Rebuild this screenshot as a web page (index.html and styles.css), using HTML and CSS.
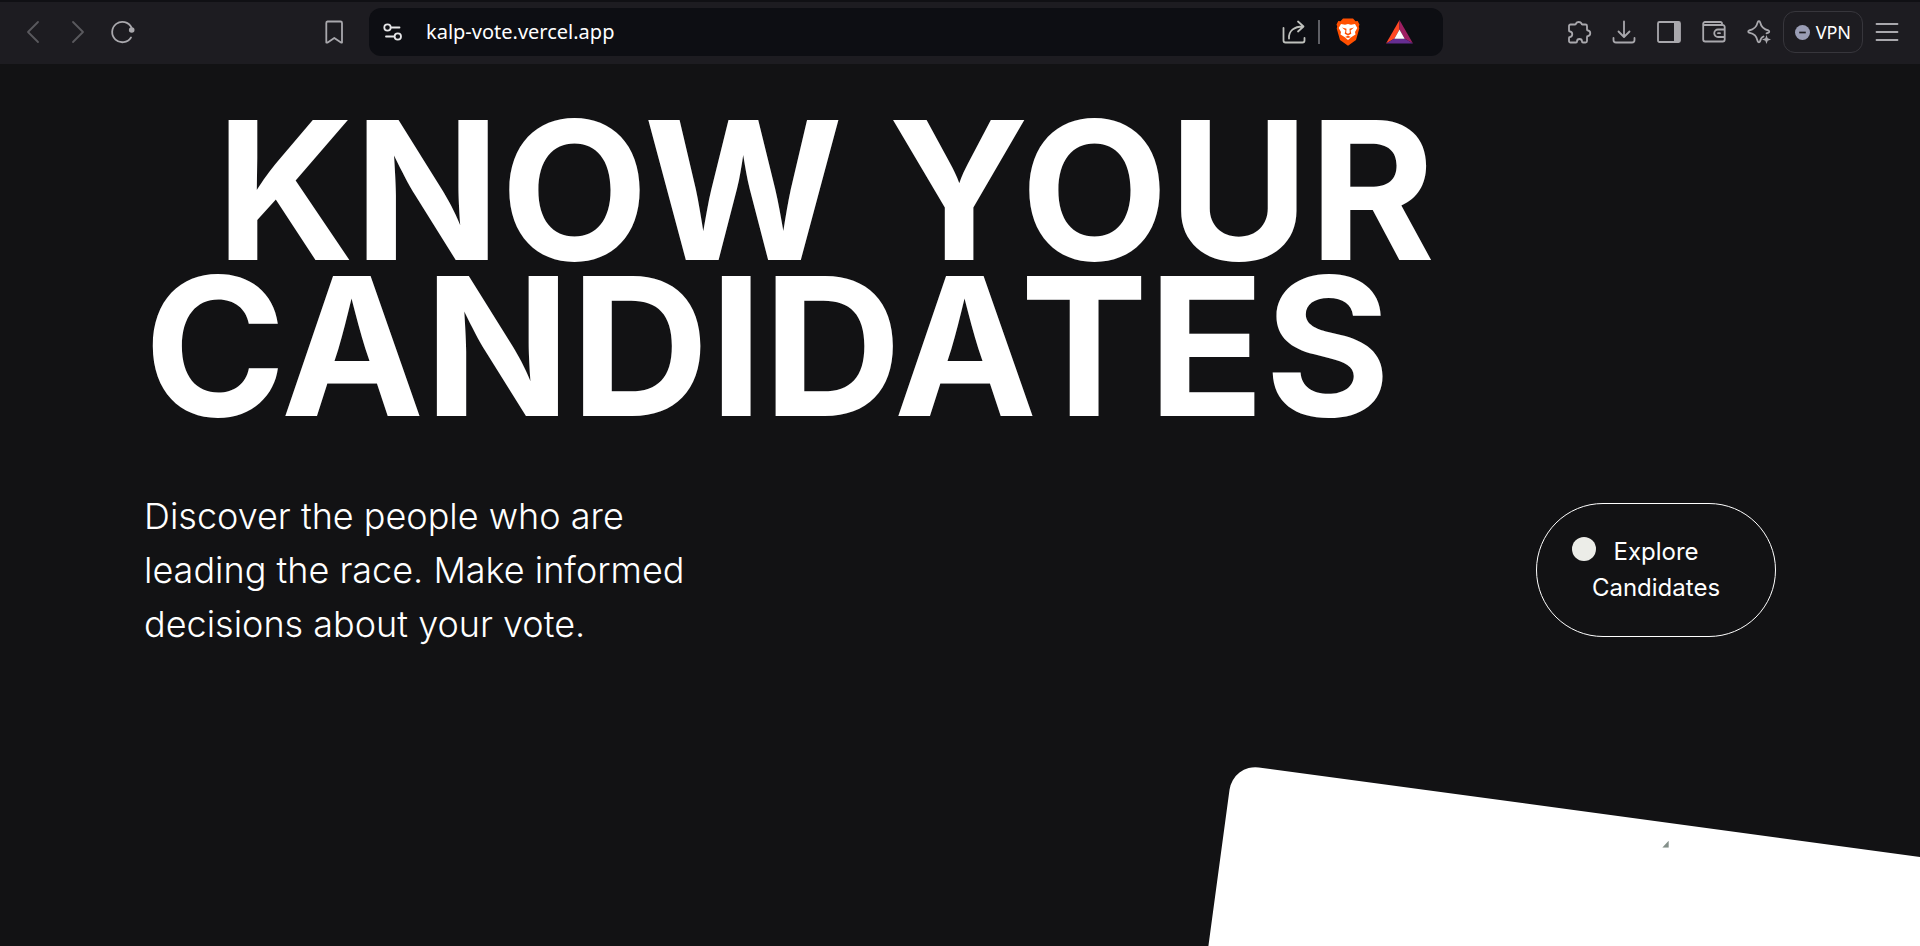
FILE: index.html
```html
<!DOCTYPE html>
<html lang="en">
<head>
<meta charset="utf-8">
<title>Kalp Vote</title>
<link rel="stylesheet" href="styles.css">
</head>
<body>
<header class="toolbar">
  <nav class="nav-group" aria-label="Navigation">
    <button class="icon-button dim" aria-label="Back"><svg viewBox="0 0 24 24"><path d="M17 2 7 12l10 10"/></svg></button>
    <button class="icon-button dim" aria-label="Forward"><svg viewBox="0 0 24 24"><path d="M7 2l10 10L7 22"/></svg></button>
    <button class="icon-button" aria-label="Reload"><svg viewBox="0 0 24 24"><path d="M20 17.500A10.200 10.200 0 1 1 20.500 7.500" stroke-width="1.800"/><circle cx="20.700" cy="10" r="2.800" fill="currentColor" stroke="none"/></svg></button>
  </nav>
  <button class="icon-button bookmark" aria-label="Bookmark"><svg viewBox="0 0 24 24"><path d="M5.500 1.500h13a1.500 1.500 0 0 1 1.500 1.500V22.500h-1l-6.700-4.500L5.700 22.500H4.300V3a1.500 1.500 0 0 1 1.200-1.500z"/></svg></button>
  <div class="address">
    <button class="icon-button bright" aria-label="Site settings"><svg viewBox="0 0 24 24"><circle cx="6.500" cy="7.500" r="3.200"/><path d="M10 7.500h8.500M5 16.500h8"/><circle cx="16.800" cy="16.500" r="3.200"/></svg></button>
    <input class="url" type="text" value="kalp-vote.vercel.app" aria-label="Address">
    <button class="icon-button share" aria-label="Share"><svg viewBox="0 0 24 24"><path d="M1.500 8v12.500a2 2 0 0 0 2 2h17a2 2 0 0 0 2-2V18M7 18.500C6.500 11 12 6.500 21 6.500M16 1.500l5.500 5-5.500 5"/></svg></button>
    <span class="divider"></span>
    <button class="icon-button shield" aria-label="Brave Shields"><svg viewBox="0 0 24 28"><path fill="#ff4f00" d="M7 .5h10l2.500 2.800 2.200-.3 1.800 3.500-.7 2 .5 2-3.300 11.500-8 5.800-8-5.800L.7 10.500l.5-2-.7-2L2.300 3l2.200.3z"/><path fill="#fff" d="M5 6l4 .8 3-.8 3 .8 4-.8 2.300 4-2.300 4 .5 2.500-4 2.500L12 22l-3.500-3-4-2.500.5-2.500-2.300-4z"/><path fill="#ff4f00" d="M6 9.500l4.500 1.200-.3 4 1.800 1 1.800-1-.3-4L18 9.500l-3.500 3 .8 3.200L12 17.500l-3.300-1.800.8-3.200zM9 19l3-1.200 3 1.200-3 1z"/></svg></button>
    <button class="icon-button rewards" aria-label="Brave Rewards"><svg viewBox="0 0 27 24"><path fill="#ff4724" d="M13.500 0 0 23.500l8.500-5 5-9z"/><path fill="#9e1f63" d="M13.500 0 27 23.500l-8.500-5-5-9z"/><path fill="#662d91" d="M0 23.500h27l-8.500-5h-10z"/><path fill="#fff" d="M13.500 9.500 8.300 18.700h10.400z"/></svg></button>
  </div>
  <div class="tools">
    <button class="icon-button" aria-label="Extensions"><svg viewBox="0 0 24 24"><path d="M3.500 4.500H8a1 1 0 0 0 1-1 3 2.500 0 0 1 5.500 0 1 1 0 0 0 1 1h3a1.500 1.500 0 0 1 1.500 1.500v3.500a1 1 0 0 0 1 1 2.800 2.800 0 0 1 0 5.500 1 1 0 0 0-1 1V21a1.500 1.500 0 0 1-1.500 1.500h-2.500a1 1 0 0 1-1-1 2.500 2.500 0 0 0-5 0 1 1 0 0 1-1 1H3.500A1.500 1.500 0 0 1 2 21v-3a1 1 0 0 1 1-1 2.800 2.800 0 0 0 0-5.500 1 1 0 0 1-1-1V6a1.500 1.500 0 0 1 1.500-1.500z"/></svg></button>
    <button class="icon-button" aria-label="Downloads"><svg viewBox="0 0 24 24"><path d="M12 1.500v15M6.500 11.500 12 17l5.500-5.500M1.500 18v2A2.500 2.500 0 0 0 4 22.500h16a2.500 2.500 0 0 0 2.500-2.500v-2"/></svg></button>
    <button class="icon-button" aria-label="Sidebar"><svg viewBox="0 0 24 24"><rect x="1" y="2" width="22" height="20" rx="1.500"/><path d="M17 2h6v20h-6z" fill="currentColor" stroke="none"/></svg></button>
    <button class="icon-button" aria-label="Wallet"><svg viewBox="0 0 24 24"><path d="M20 5V3.500A1.500 1.500 0 0 0 18.500 2H3a1.800 1.800 0 0 0-1.800 1.800V19.500A2 2 0 0 0 3.200 21.500h17.500a2 2 0 0 0 2-2V7a2 2 0 0 0-2-2H3a1.500 1.500 0 0 1-1.800-1.500M22.500 9.500H16a3.500 3.500 0 0 0 0 7.500h6.500M16 13.200h2"/></svg></button>
    <button class="icon-button" aria-label="Leo AI"><svg viewBox="0 0 24 24"><path d="M16.500 16.500c-2 .8-3 2.500-3.500 5-.4 1-1.800 1-2.200 0C9.500 16 7.500 13.800 2 12.700c-1-.4-1-1.800 0-2.200C7.500 9.400 9.500 7 10.800 2c.4-1 1.800-1 2.200 0 1.200 5 3.200 7.400 8.500 8.500 1 .4 1 1.800 0 2.200l-2 .6"/><path fill="currentColor" stroke="none" d="M19.500 15l1.200 3.300L24 19.500l-3.300 1.200L19.500 24l-1.200-3.300L15 19.500l3.300-1.200z"/></svg></button>
    <button class="vpn"><svg viewBox="0 0 16 16" aria-hidden="true"><circle cx="8" cy="8" r="8" fill="#9a9db5"/><path d="M4.500 8h7" stroke="#1d1c21" stroke-width="1.800"/></svg>VPN</button>
    <button class="icon-button" aria-label="Menu"><svg viewBox="0 0 24 24"><path d="M1.500 4h21M1.500 12h21M1.500 20h21"/></svg></button>
  </div>
</header>
<main class="page">
  <h1 class="headline"><span class="indent">KNOW YOUR</span><br>CANDIDATES</h1>
  <section class="intro">
    <p class="lead">Discover the people who are leading the race. Make informed decisions about your vote.</p>
    <button class="explore"><span class="dot"></span>Explore Candidates</button>
  </section>
  <div class="card"><svg class="card-mark" viewBox="0 0 7 7" aria-hidden="true"><path d="M0 7 6.500 0v7z"/></svg></div>
</main>
</body>
</html>
```
FILE: styles.css
```css
* { box-sizing: border-box; }

body {
  margin: 0;
  height: 100vh;
  display: flex;
  flex-direction: column;
  overflow: hidden;
  background: #121214;
  color: #fff;
  font-family: Inter, "Liberation Sans", sans-serif;
}

button {
  padding: 0;
  border: 0;
  background: none;
  color: inherit;
  font: inherit;
}

.toolbar {
  flex: none;
  display: flex;
  align-items: center;
  height: 64px;
  padding: 0 21px 2px;
  border-top: 2px solid #101014;
  background: #1d1c21;
  color: #a9a8ad;
}

.nav-group { display: flex; gap: 21px; }

.icon-button {
  flex: none;
  display: flex;
  width: 24px;
  height: 24px;
}

.icon-button svg {
  width: 100%;
  height: 100%;
  overflow: visible;
  fill: none;
  stroke: currentColor;
  stroke-width: 1.8;
  stroke-linecap: round;
  stroke-linejoin: round;
}

.icon-button.shield svg, .icon-button.rewards svg { stroke: none; }
.dim { color: #5a595e; }
.bright { color: #e6e6e8; }
.bookmark { margin-left: 187px; }

.address {
  flex: none;
  display: flex;
  align-items: center;
  width: 60%;
  max-width: 1074px;
  height: 48px;
  margin-left: 23px;
  padding: 0 30px 0 12px;
  border-radius: 12px;
  background: #0d0e13;
}

.url {
  flex: 1;
  min-width: 0;
  margin-left: 21px;
  padding: 0;
  border: 0;
  background: none;
  color: #fff;
  font: 20px/28px "Noto Sans", sans-serif;
}

.share { color: #bfc1bd; }
.divider { width: 2px; height: 24px; margin: 0 16px 0 12px; background: #5f6066; }
.shield { height: 28px; }
.rewards { width: 27px; margin-left: 26px; }

.tools {
  flex: 1;
  display: flex;
  justify-content: flex-end;
  align-items: center;
  gap: 21px;
}

.vpn {
  display: flex;
  align-items: center;
  gap: 6px;
  height: 42px;
  margin: 0 -9px;
  padding: 0 11px;
  border: 1px solid #37363c;
  border-radius: 12px;
  color: #fff;
  font: 18px/24px "Noto Sans", sans-serif;
}

.vpn svg { width: 15px; height: 15px; }

.page {
  flex: 1;
  position: relative;
  overflow: hidden;
  padding: 48px 144px 0;
}

.headline {
  margin: 0;
  font-size: 192px;
  font-weight: 700;
  line-height: 156px;
}

.indent { padding-left: 72px; }

.intro {
  display: flex;
  justify-content: space-between;
  align-items: center;
  margin-top: 65px;
}

.lead {
  width: 560px;
  margin: 0;
  font-size: 36px;
  font-weight: 300;
  line-height: 54px;
}

.explore {
  position: relative;
  width: 240px;
  padding: 30px 36px;
  border: 1px solid #fff;
  border-radius: 72px;
  font-size: 24px;
  line-height: 36px;
  text-align: center;
}

.dot {
  position: absolute;
  left: 35px;
  top: 33px;
  width: 24px;
  height: 24px;
  border-radius: 50%;
  background: #ecede8;
}

.card {
  position: absolute;
  left: 1233px;
  top: 700px;
  width: 900px;
  height: 600px;
  border-radius: 26px;
  background: #fff;
  transform: rotate(7.7deg);
  transform-origin: 0 0;
}

.card-mark {
  position: absolute;
  left: 436px;
  top: 18px;
  width: 7px;
  height: 7px;
  fill: #84908a;
  transform: rotate(-7.7deg);
}
```
